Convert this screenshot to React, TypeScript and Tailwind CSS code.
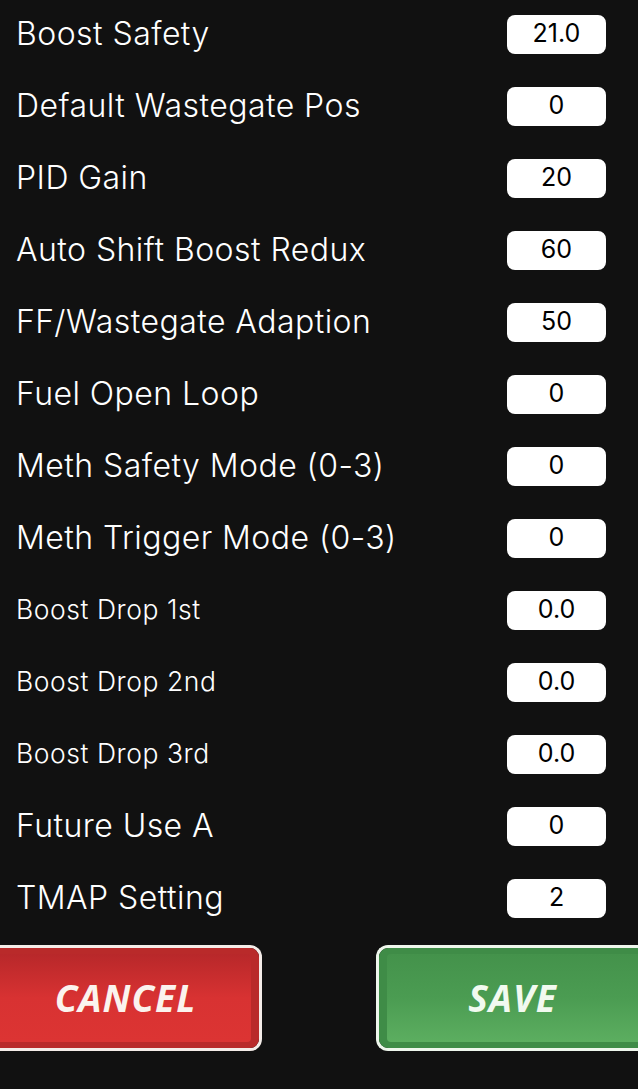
import React from "react";

const rows: { label: string; value: string; small?: boolean }[] = [
  { label: "Boost Safety", value: "21.0" },
  { label: "Default Wastegate Pos", value: "0" },
  { label: "PID Gain", value: "20" },
  { label: "Auto Shift Boost Redux", value: "60" },
  { label: "FF/Wastegate Adaption", value: "50" },
  { label: "Fuel Open Loop", value: "0" },
  { label: "Meth Safety Mode (0-3)", value: "0" },
  { label: "Meth Trigger Mode (0-3)", value: "0" },
  { label: "Boost Drop 1st", value: "0.0", small: true },
  { label: "Boost Drop 2nd", value: "0.0", small: true },
  { label: "Boost Drop 3rd", value: "0.0", small: true },
  { label: "Future Use A", value: "0" },
  { label: "TMAP Setting", value: "2" },
];

export default function App() {
  return (
    <div
      className="w-[638px] h-[1089px] bg-[#111111] text-white overflow-hidden"
      style={{ fontFamily: "Inter, 'Noto Sans', sans-serif" }}
    >
      <div className="flex flex-col -mt-[2px]">
        {rows.map((r) => (
          <div key={r.label} className="h-[72px] flex items-center justify-between pl-4 pr-8">
            <span
              className={
                r.small
                  ? "text-[26.5px] font-light tracking-[0.55px]"
                  : "text-[32px] font-light tracking-[0.45px]"
              }
            >
              {r.label}
            </span>
            <div className="w-[99px] h-[39px] bg-white rounded-[8px] flex items-center justify-center text-black text-[25px]">
              {r.value}
            </div>
          </div>
        ))}
      </div>
      <div className="flex justify-between mt-[11px]">
        <button className="w-[262px] h-[106px] rounded-r-[12px] border-[3px] border-l-0 border-[#f4ece8] p-0 overflow-hidden">
          <div className="h-full w-full flex flex-col bg-[#b92a2a]">
            <div className="flex-1 mr-[8px] mt-[6px] mb-[6px] rounded-r-[4px] bg-gradient-to-b from-[#b8282a] via-[#d83232] to-[#dc3433] flex items-center justify-center">
              <span
                className="text-[37px] font-bold italic text-[#fbf3ee] tracking-[1px]"
                style={{ fontFamily: "'Open Sans', sans-serif" }}
              >
                CANCEL
              </span>
            </div>
          </div>
        </button>
        <button className="w-[262px] h-[106px] rounded-l-[12px] border-[3px] border-r-0 border-[#eef6ec] p-0 overflow-hidden">
          <div className="h-full w-full flex flex-col bg-[#3f8c47]">
            <div className="flex-1 ml-[8px] mt-[6px] mb-[6px] rounded-l-[4px] bg-gradient-to-b from-[#44924b] via-[#4b9c52] to-[#5cae60] flex items-center justify-center">
              <span
                className="text-[37px] font-bold italic text-[#f2faf0] tracking-[1px]"
                style={{ fontFamily: "'Open Sans', sans-serif" }}
              >
                SAVE
              </span>
            </div>
          </div>
        </button>
      </div>
    </div>
  );
}
